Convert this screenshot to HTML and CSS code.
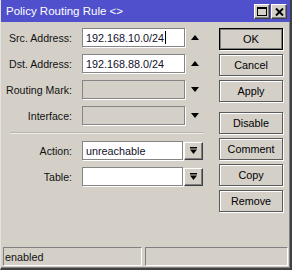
FILE: index.html
```html
<!DOCTYPE html>
<html lang="en">
<head>
  <meta charset="UTF-8">
  <title>Policy Routing Rule</title>
  <link rel="stylesheet" href="styles.css">
</head>
<body>

<div class="window">
  <!-- Title bar -->
  <div class="titlebar">
    <span class="title">Policy Routing Rule &lt;&gt;</span>
    <div class="tbtns">
      <span class="tbtn">
        <svg width="10" height="9" viewBox="0 0 10 9"><rect x="0.5" y="0.5" width="9" height="8" fill="none" stroke="#000"/><rect x="0" y="0" width="10" height="2" fill="#000"/></svg>
      </span>
      <span class="tbtn">
        <svg width="9" height="8" viewBox="0 0 9 8"><path d="M1 0.5 L8 7.5 M8 0.5 L1 7.5" stroke="#000" stroke-width="2"/></svg>
      </span>
    </div>
  </div>

  <div class="content">
    <!-- Fields -->
    <div class="form">
      <div class="row">
        <label>Src. Address:</label>
        <div class="field">192.168.10.0/24<span class="caret"></span></div>
        <span class="arrow"><svg width="8" height="5" viewBox="0 0 8 5"><path d="M0 5 L4 0 L8 5 Z" fill="#000"/></svg></span>
      </div>
      <div class="row">
        <label>Dst. Address:</label>
        <div class="field">192.168.88.0/24</div>
        <span class="arrow"><svg width="8" height="5" viewBox="0 0 8 5"><path d="M0 5 L4 0 L8 5 Z" fill="#000"/></svg></span>
      </div>
      <div class="row">
        <label>Routing Mark:</label>
        <div class="field disabled"></div>
        <span class="arrow"><svg width="8" height="5" viewBox="0 0 8 5"><path d="M0 0 L4 5 L8 0 Z" fill="#000"/></svg></span>
      </div>
      <div class="row">
        <label>Interface:</label>
        <div class="field disabled"></div>
        <span class="arrow"><svg width="8" height="5" viewBox="0 0 8 5"><path d="M0 0 L4 5 L8 0 Z" fill="#000"/></svg></span>
      </div>

      <div class="sep"></div>

      <div class="row">
        <label>Action:</label>
        <div class="field short">unreachable</div>
        <span class="ddbtn"><svg width="7" height="7" viewBox="0 0 7 7"><rect x="0" y="0" width="7" height="1.5" fill="#000"/><path d="M0 2.5 L7 2.5 L3.5 7 Z" fill="#000"/></svg></span>
      </div>
      <div class="row">
        <label>Table:</label>
        <div class="field short"></div>
        <span class="ddbtn"><svg width="7" height="7" viewBox="0 0 7 7"><rect x="0" y="0" width="7" height="1.5" fill="#000"/><path d="M0 2.5 L7 2.5 L3.5 7 Z" fill="#000"/></svg></span>
      </div>
    </div>

    <!-- Buttons -->
    <div class="buttons">
      <button class="default">OK</button>
      <button>Cancel</button>
      <button>Apply</button>
      <button class="gap">Disable</button>
      <button>Comment</button>
      <button>Copy</button>
      <button>Remove</button>
    </div>
  </div>

  <!-- Status bar -->
  <div class="status">
    <div class="panel left">enabled</div>
    <div class="panel right"></div>
  </div>
</div>

</body>
</html>
```

FILE: styles.css
```css
body { margin: 0; font-family: "Liberation Sans", Arial, sans-serif; font-size: 11px; color: #000; background: #d4d0c8; }
.window { box-sizing: border-box; width: 292px; height: 270px; display: flex; flex-direction: column; background: #d4d0c8; border-left: 1px solid #e4e2de; border-right: 2px solid #404040; border-bottom: 2px solid #404040; box-shadow: inset -1px -1px 0 #808080; }

.titlebar { height: 22px; flex: none; background: #5050cc; display: flex; align-items: center; justify-content: space-between; padding: 0 3px 0 5px; }
.title { color: #fff; font-size: 11.5px; }
.tbtns { display: flex; gap: 1px; align-self: flex-start; margin-top: 4px; }
.tbtn { box-sizing: border-box; width: 16px; height: 15px; background: #d4d0c8; display: flex; align-items: center; justify-content: center; border: 1px solid; border-color: #fff #404040 #404040 #fff; box-shadow: inset -1px -1px 0 #808080; }

.content { flex: 1; display: flex; padding-top: 6px; }
.form { width: 203px; }
.row { display: flex; align-items: center; height: 19px; margin-bottom: 7px; }
.row label { width: 71px; text-align: right; margin-right: 10px; font-size: 10.6px; color: #111; }
.field { box-sizing: border-box; width: 103px; height: 19px; background: #fff; border: 1px solid #858585; box-shadow: 1px 1px 0 #fff; padding: 2px 3px; font-size: 10.8px; color: #10102a; white-space: nowrap; display: flex; align-items: center; }
.field.disabled { background: #d4d0c8; }
.field.short { width: 101px; }
.caret { display: inline-block; width: 1px; height: 13px; background: #000; margin-left: 1px; }
.arrow { display: flex; margin-left: 6px; }
.ddbtn { box-sizing: border-box; width: 19px; height: 18px; margin-left: 1px; display: flex; align-items: center; justify-content: center; background: #d4d0c8; border: 1px solid; border-color: #fff #404040 #404040 #fff; box-shadow: inset -1px -1px 0 #808080; }
.sep { margin: 3px 0 7px 9px; height: 1px; background: #bab6ae; border-bottom: 1px solid #eeece8; }

.buttons { margin-left: 15px; display: flex; flex-direction: column; gap: 4px; }
button { box-sizing: border-box; width: 64px; height: 22px; margin: 0; padding: 0; font-family: inherit; font-size: 10.8px; color: #000; background: #d4d0c8; border: 1px solid #5a5a5a; box-shadow: 1px 1px 0 #fff, inset 1px 1px 0 #fff; }
button.default { border-color: #000; box-shadow: 1px 1px 0 #fff, inset 1px 1px 0 #808080, inset -1px -1px 0 #808080; font-size: 11px; }
button.gap { margin-top: 6px; }

.status { flex: none; display: flex; gap: 3px; padding: 0 2px 2px 2px; }
.panel { box-sizing: border-box; height: 19px; border: 1px solid; border-color: #808080 #fff #fff #808080; padding-left: 1px; font-size: 10.8px; display: flex; align-items: center; color: #111; }
.panel.left { width: 139px; }
.panel.right { flex: 1; }
```
